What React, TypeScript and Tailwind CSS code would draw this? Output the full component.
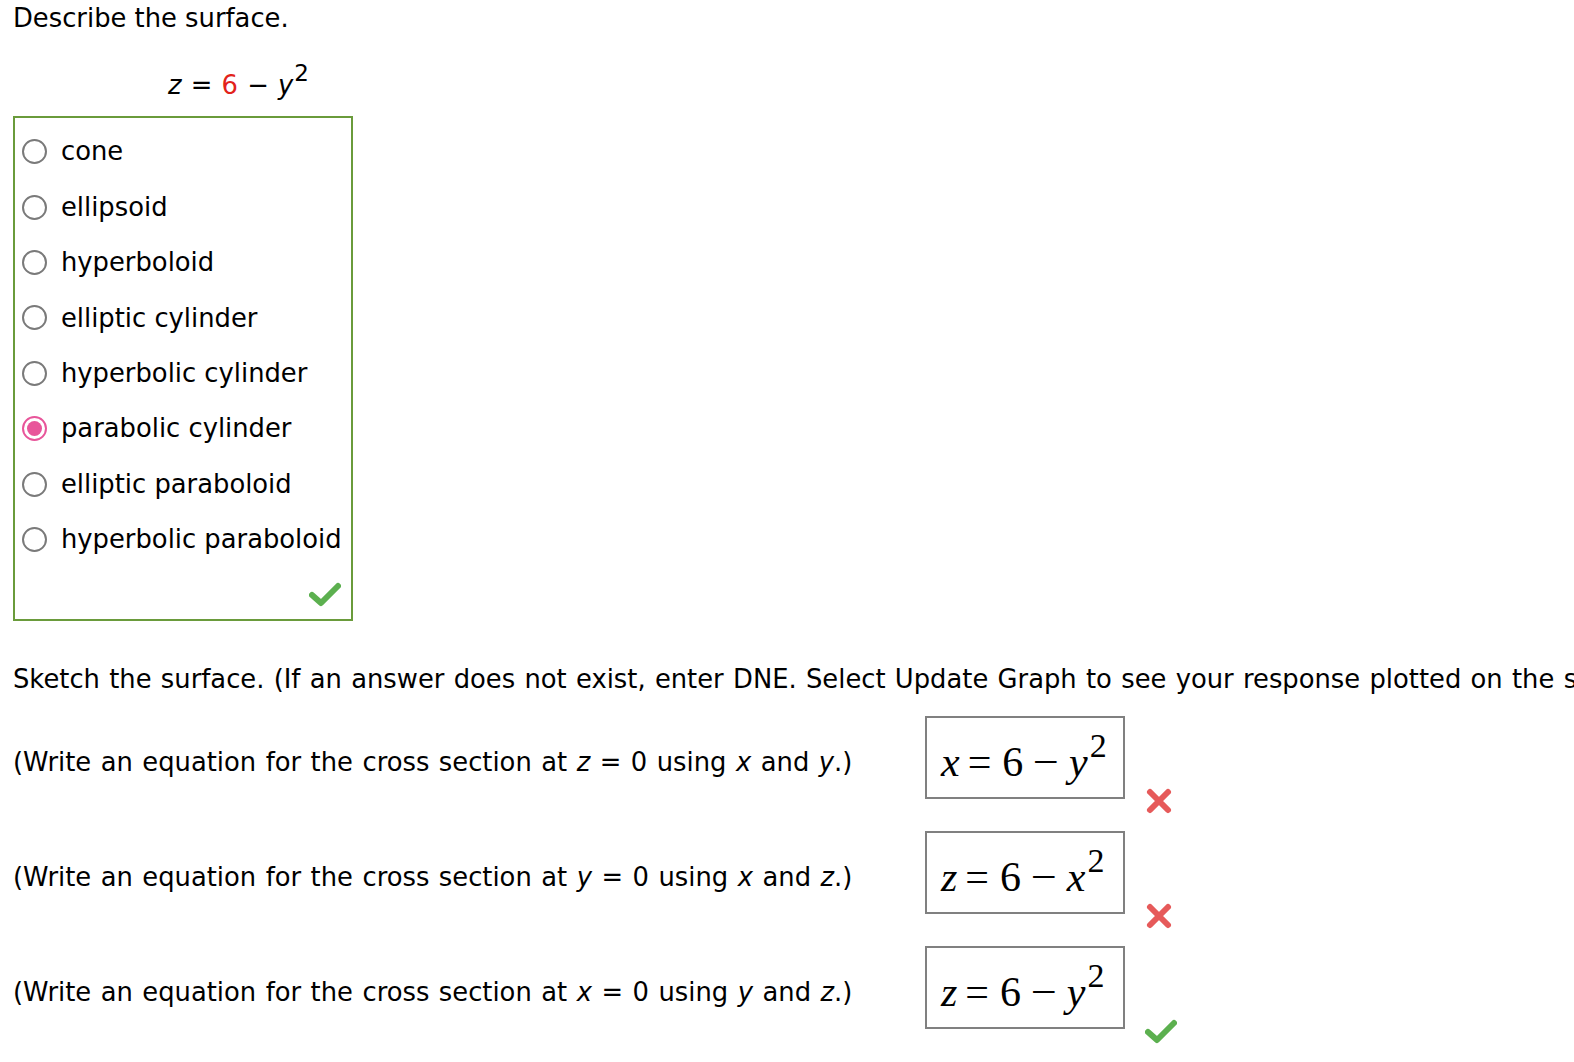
import React from 'react';

const options = [
  'cone',
  'ellipsoid',
  'hyperboloid',
  'elliptic cylinder',
  'hyperbolic cylinder',
  'parabolic cylinder',
  'elliptic paraboloid',
  'hyperbolic paraboloid',
];

const CheckMark = () => (
  <svg width="32" height="26" viewBox="0 0 32 26">
    <path
      d="M3 14 L12 22 L29 5"
      fill="none"
      stroke="#5cb04f"
      strokeWidth="6"
      strokeLinecap="round"
      strokeLinejoin="round"
    />
  </svg>
);

const CrossMark = () => (
  <svg width="28" height="28" viewBox="0 0 28 28">
    <path
      d="M5 5 L23 23 M23 5 L5 23"
      fill="none"
      stroke="#e65a5a"
      strokeWidth="6"
      strokeLinecap="round"
    />
  </svg>
);

const Radio = ({ checked }: { checked: boolean }) =>
  checked ? (
    <span className="flex h-[25px] w-[25px] items-center justify-center rounded-full border-2 border-[#e8559a]">
      <span className="h-[15px] w-[15px] rounded-full bg-[#e8559a]" />
    </span>
  ) : (
    <span className="h-[25px] w-[25px] rounded-full border-2 border-[#7a7a7a]" />
  );

interface Row {
  at: string;
  vars: [string, string];
  lhs: string;
  rhsVar: string;
  correct: boolean;
}

const rows: Row[] = [
  { at: 'z', vars: ['x', 'y'], lhs: 'x', rhsVar: 'y', correct: false },
  { at: 'y', vars: ['x', 'z'], lhs: 'z', rhsVar: 'x', correct: false },
  { at: 'x', vars: ['y', 'z'], lhs: 'z', rhsVar: 'y', correct: true },
];

export default function App() {
  return (
    <div
      className="min-h-screen w-[1574px] overflow-hidden bg-white px-[13px] text-[25.8px] text-black"
      style={{ fontFamily: '"DejaVu Sans", Verdana, sans-serif' }}
    >
      <div className="leading-[36px]">Describe the surface.</div>

      <div className="mt-[31px] pl-[155px] leading-[36px] [word-spacing:1px]">
        <i>z</i> = <span className="text-[#e2231a]">6</span> − <i>y</i>
        <span className="relative -top-[13px] ml-[1px] text-[23px]">2</span>
      </div>

      <div className="mt-[12px] w-[340px] border-2 border-[#6a9b3b] pt-[6px] pb-[12px] pl-[7px]">
        {options.map((o) => (
          <div key={o} className="flex h-[55.4px] items-center">
            <Radio checked={o === 'parabolic cylinder'} />
            <span className="ml-[14px] whitespace-nowrap">{o}</span>
          </div>
        ))}
        <div className="flex justify-end pr-[10px] pt-[14px]">
          <CheckMark />
        </div>
      </div>

      <div className="mt-[40px] whitespace-nowrap leading-[36px] [word-spacing:1.1px]">
        Sketch the surface. (If an answer does not exist, enter DNE. Select Update Graph to see your response plotted on the screen.)
      </div>

      <div className="mt-[19px] flex flex-col gap-[32px]">
        {rows.map((r) => (
          <div key={r.at} className="flex items-center">
            <div className="w-[912px] shrink-0 whitespace-nowrap pt-[10px] [word-spacing:1.3px]">
              (Write an equation for the cross section at <i>{r.at}</i> = 0 using <i>{r.vars[0]}</i> and{' '}
              <i>{r.vars[1]}</i>.)
            </div>
            <div
              className="flex h-[83px] w-[200px] shrink-0 items-center border-2 border-[#808080] pl-[14px] pt-[8px] text-[42px] leading-none"
              style={{ fontFamily: '"Liberation Serif", "Times New Roman", serif' }}
            >
              <i>{r.lhs}</i>
              <span className="ml-[8px] mr-[11px]">=</span>6<span className="mx-[11px] scale-x-110">−</span>
              <i>{r.rhsVar}</i>
              <span className="relative -top-[16px] ml-[2px] text-[34px]">2</span>
            </div>
            <div className="mb-[-86px] ml-[20px] shrink-0">
              {r.correct ? <CheckMark /> : <CrossMark />}
            </div>
          </div>
        ))}
      </div>
    </div>
  );
}
